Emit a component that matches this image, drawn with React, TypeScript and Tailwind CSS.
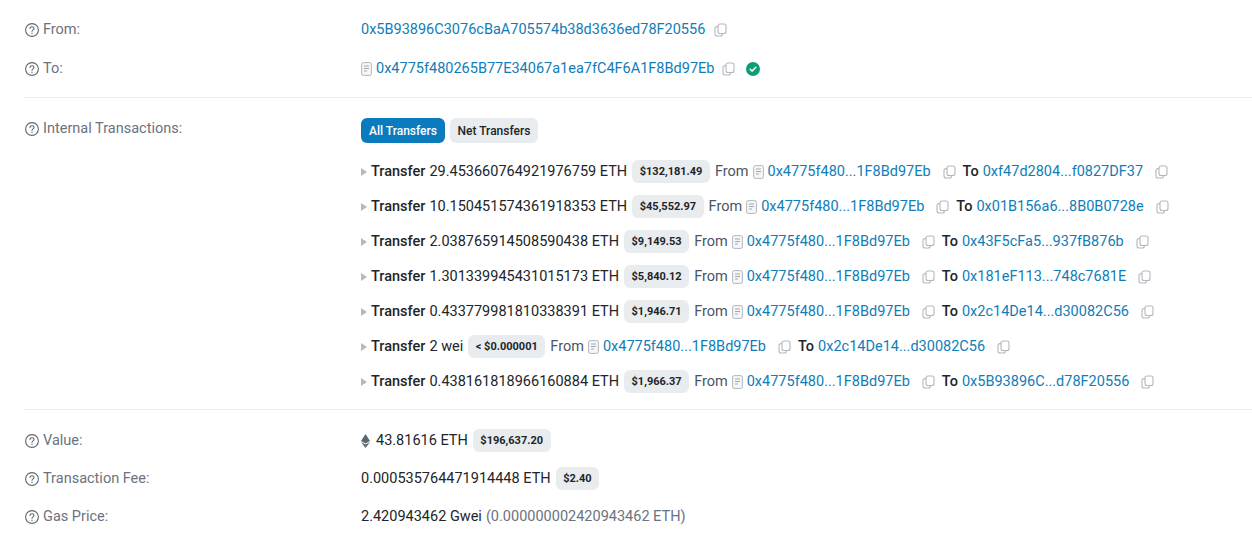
import React from "react";

function Help() {
  return (
    <svg width="14" height="14" viewBox="0 0 14 14" fill="none" className="shrink-0">
      <circle cx="7" cy="7" r="6.4" stroke="#5f6670" strokeWidth="1.1" />
      <path d="M5 5.4C5.1 4.3 6 3.7 7 3.7c1.1 0 2 .7 2 1.7 0 1.4-2 1.5-2 2.8" stroke="#5f6670" strokeWidth="1.1" strokeLinecap="round" />
      <circle cx="7" cy="10.2" r=".7" fill="#5f6670" />
    </svg>
  );
}

function Copy({ className = "" }: { className?: string }) {
  return (
    <svg width="13" height="14" viewBox="0 0 13 14" fill="none" className={"shrink-0 " + className}>
      <rect x="4" y="1" width="8" height="9.5" rx="2" stroke="#b4b8bf" strokeWidth="1.1" />
      <path d="M4 3.6H3a2 2 0 0 0-2 2V11a2 2 0 0 0 2 2h3.4a2 2 0 0 0 2-2v-.5" stroke="#b4b8bf" strokeWidth="1.1" />
    </svg>
  );
}

function Doc() {
  return (
    <svg width="11" height="14" viewBox="0 0 11 14" fill="none" className="shrink-0">
      <rect x=".6" y=".6" width="9.8" height="12.8" rx="1.6" fill="#f5f6f7" stroke="#b4b8bf" strokeWidth="1" />
      <path d="M3 4h5M3 6.5h5M3 9h3" stroke="#a3a8af" strokeWidth="1" />
    </svg>
  );
}

function Label({ children }: { children: React.ReactNode }) {
  return (
    <div className="flex w-[337px] shrink-0 items-center gap-[4px] pl-px text-[#6b7280]">
      <Help />
      <span>{children}</span>
    </div>
  );
}

function Badge({ children, className = "" }: { children: React.ReactNode; className?: string }) {
  return (
    <span className={"inline-flex h-[23px] items-center rounded-md bg-[#e9ecef] px-[7.5px] text-[11px] font-bold text-[#212529] " + className}>
      {children}
    </span>
  );
}

const link = "text-[#0f7db8]";

type T = { amount: string; usd: string; to: string };

const transfers: T[] = [
  { amount: "29.453660764921976759 ETH", usd: "$132,181.49", to: "0xf47d2804...f0827DF37" },
  { amount: "10.150451574361918353 ETH", usd: "$45,552.97", to: "0x01B156a6...8B0B0728e" },
  { amount: "2.038765914508590438 ETH", usd: "$9,149.53", to: "0x43F5cFa5...937fB876b" },
  { amount: "1.301339945431015173 ETH", usd: "$5,840.12", to: "0x181eF113...748c7681E" },
  { amount: "0.433779981810338391 ETH", usd: "$1,946.71", to: "0x2c14De14...d30082C56" },
  { amount: "2 wei", usd: "< $0.000001", to: "0x2c14De14...d30082C56" },
  { amount: "0.438161818966160884 ETH", usd: "$1,966.37", to: "0x5B93896C...d78F20556" },
];

function TransferRow({ t }: { t: T }) {
  return (
    <div className="flex h-[35px] items-center whitespace-nowrap text-[#212529]">
      <span className="mr-[4px] h-0 w-0 border-y-[4px] border-l-[6px] border-y-transparent border-l-[#b4b8bf]" />
      <span className="font-medium">Transfer</span>
      <span className="ml-[4px]">{t.amount}</span>
      <Badge className="ml-[5px]">{t.usd}</Badge>
      <span className="ml-[5px] mr-[4px] text-[#4b5563]">From</span>
      <Doc />
      <span className={"ml-[4px] " + link}>0x4775f480...1F8Bd97Eb</span>
      <Copy className="ml-[12px]" />
      <span className="ml-[7px] font-medium">To</span>
      <span className={"ml-[4px] " + link}>{t.to}</span>
      <Copy className="ml-[12px]" />
    </div>
  );
}

export default function App() {
  return (
    <div className="h-[540px] w-[1252px] overflow-hidden bg-white pl-[24px] text-[14.5px] leading-[20px] text-[#212529] [font-family:Roboto,'Liberation_Sans',sans-serif]">
      <div className="flex h-[98px] flex-col border-b border-[#eceef0] pt-[20px]">
        <div className="flex h-[20px] items-center">
          <Label>From:</Label>
          <span className={link}>0x5B93896C3076cBaA705574b38d3636ed78F20556</span>
          <Copy className="ml-[9px]" />
        </div>
        <div className="mt-[19px] flex h-[20px] items-center">
          <Label>To:</Label>
          <Doc />
          <span className={"ml-[4px] " + link}>0x4775f480265B77E34067a1ea7fC4F6A1F8Bd97Eb</span>
          <Copy className="ml-[8px]" />
          <svg width="14" height="14" viewBox="0 0 14 14" className="ml-[11px] shrink-0">
            <circle cx="7" cy="7" r="7" fill="#0f9d76" />
            <path d="M4.2 7.2l2 1.9 3.6-3.8" stroke="#fff" strokeWidth="1.5" fill="none" strokeLinecap="round" strokeLinejoin="round" />
          </svg>
        </div>
      </div>

      <div className="flex h-[312px] border-b border-[#eceef0] pt-[20px]">
        <div className="mt-px h-[20px]">
          <Label>Internal Transactions:</Label>
        </div>
        <div className="flex flex-col">
          <div className="flex h-[25px] gap-[5px] text-[12px] font-medium">
            <span className="flex w-[84px] items-center justify-center rounded-md bg-[#0a7cbd] text-white">All Transfers</span>
            <span className="flex w-[88px] items-center justify-center rounded-md bg-[#e9ecef] text-[#212529]">Net Transfers</span>
          </div>
          <div className="mt-[11px] flex flex-col">
            {transfers.map((t, i) => (
              <TransferRow key={i} t={t} />
            ))}
          </div>
        </div>
      </div>

      <div className="flex flex-col pt-[19px]">
        <div className="flex h-[23px] items-center">
          <Label>Value:</Label>
          <svg width="9" height="14" viewBox="0 0 9 14" className="shrink-0">
            <path d="M4.5 0L0 7l4.5 2.6L9 7z" fill="#5f6670" />
            <path d="M4.5 10.6L0 8l4.5 6L9 8z" fill="#5f6670" />
          </svg>
          <span className="ml-[6px]">43.81616 ETH</span>
          <Badge className="ml-[5px]">$196,637.20</Badge>
        </div>
        <div className="mt-[15px] flex h-[23px] items-center">
          <Label>Transaction Fee:</Label>
          <span>0.000535764471914448 ETH</span>
          <Badge className="ml-[5px]">$2.40</Badge>
        </div>
        <div className="mt-[15px] flex h-[23px] items-center">
          <Label>Gas Price:</Label>
          <span>2.420943462 Gwei</span>
          <span className="ml-[4px] text-[#6b7280]">(0.000000002420943462 ETH)</span>
        </div>
      </div>
    </div>
  );
}
